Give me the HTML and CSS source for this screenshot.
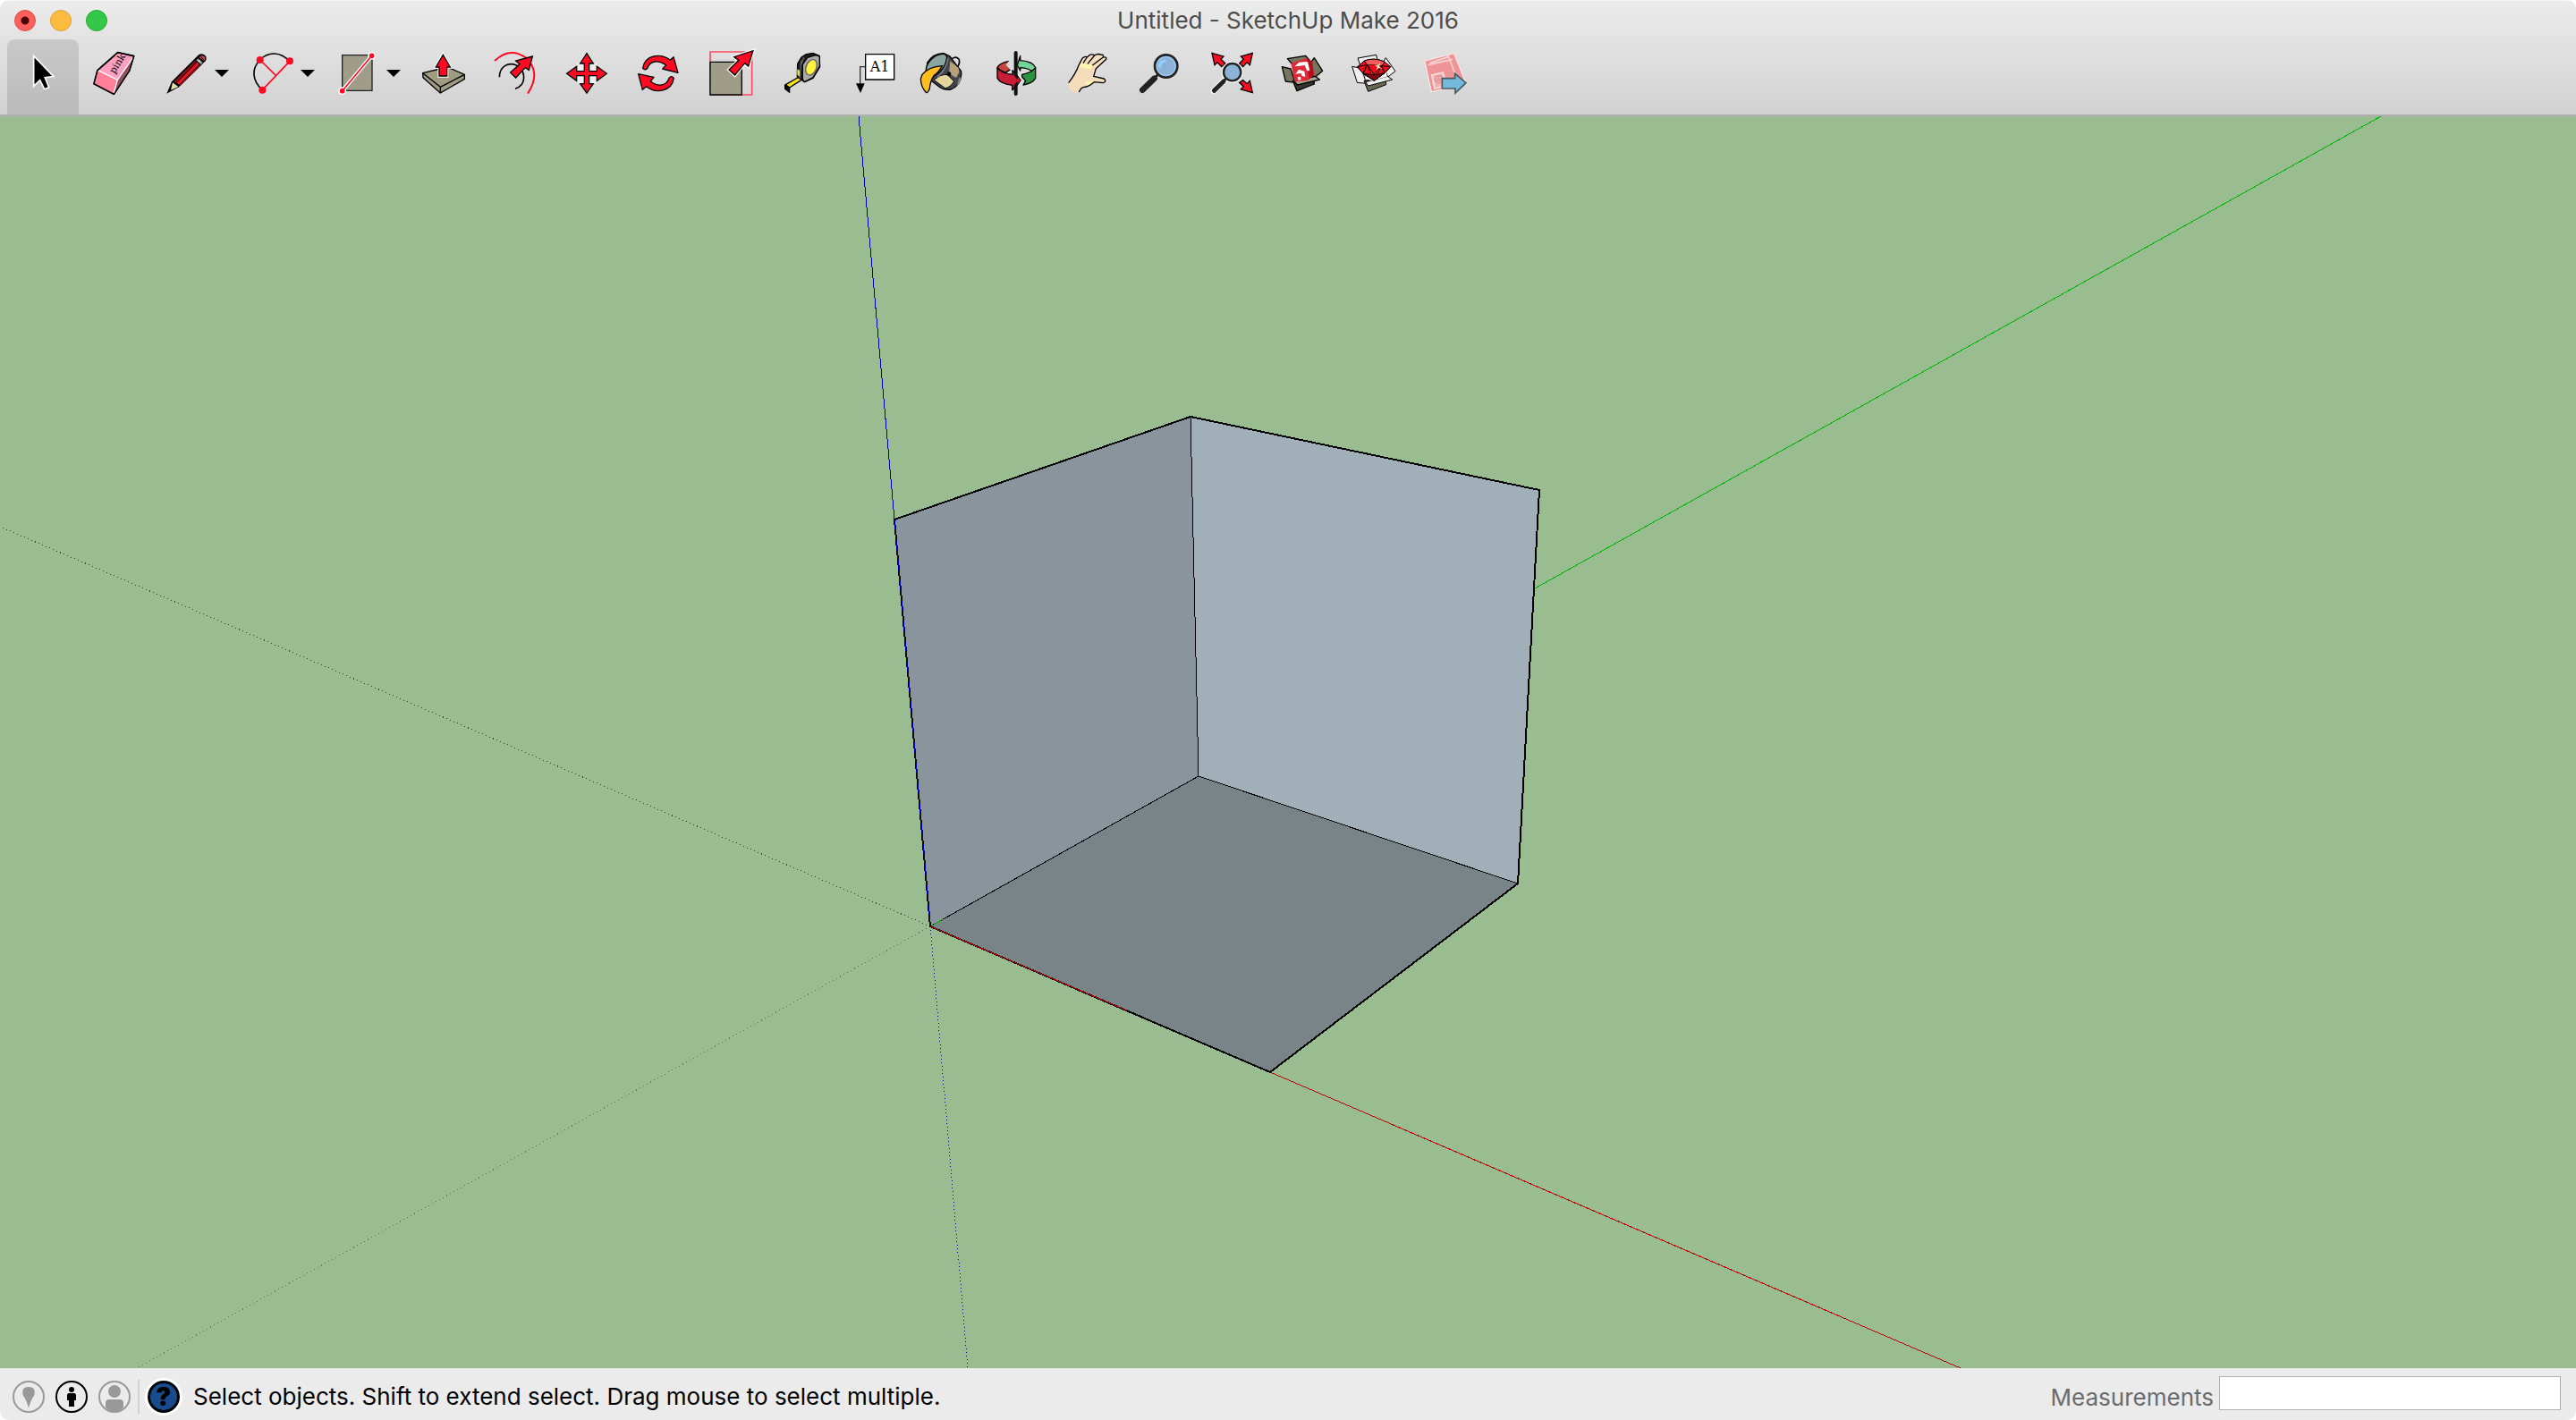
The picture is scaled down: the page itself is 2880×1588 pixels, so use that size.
FILE: index.html
```html
<!DOCTYPE html>
<html lang="en">
<head>
<meta charset="utf-8">
<title>Untitled - SketchUp Make 2016</title>
<link rel="stylesheet" href="styles.css">
</head>
<body>
<div class="window">
  <header class="chrome">
    <div class="titlebar">
      <div class="lights">
        <button class="light light-close" type="button" aria-label="Close"></button>
        <button class="light light-minimize" type="button" aria-label="Minimize"></button>
        <button class="light light-zoom" type="button" aria-label="Full screen"></button>
      </div>
      <h1 class="title">Untitled - SketchUp Make 2016</h1>
    </div>
    <nav class="toolbar" aria-label="Tools">
      <button class="tool tool-active" type="button" aria-label="Select">
        <svg class="icon" viewBox="72 162 144 168"><path d="M113 187V289L134 269L149 299L164 293L151 260L180 257Z" fill="#000" stroke="#fff" stroke-width="5"/></svg>
      </button>
      <button class="tool" type="button" aria-label="Eraser">
        <svg class="icon" viewBox="312 162 144 168">
          <g stroke-linejoin="round">
            <path d="M395 176L449 188L434 237L382 316L315 281L327 236Z" fill="#ff9fc0" stroke="#000" stroke-width="5"/>
            <path d="M329 236L394 268L382 314L317 280Z" fill="#ff8098"/>
            <path d="M394 268L446 192L433 237L382 314Z" fill="#94525f"/>
            <path d="M329 236L394 268L446 193M394 268L382 312" fill="none" stroke="#fff" stroke-width="4"/>
            <path d="M395 176L449 188L434 237L382 316L315 281L327 236Z" fill="none" stroke="#000" stroke-width="4"/>
          </g>
          <text class="eraser-label" x="384" y="249" transform="rotate(-58 384 249)">pink</text>
        </svg>
      </button>
      <button class="tool tool-menu" type="button" aria-label="Line">
        <svg class="icon" viewBox="552 162 144 168">
          <path d="M559 314L576 274L667 183Q681 176 691 189Q694 198 689 205L600 292Z" fill="#000"/>
          <path d="M579 277L598 291L573 302Z" fill="#e2dfa6"/>
          <path d="M584 273L654 203L659 208L590 279Z" fill="#7e1019"/>
          <path d="M593 278L661 209L668 215L600 284Z" fill="#f5121e"/>
          <path d="M602 284L670 217L674 220L606 287Z" fill="#7e1019"/>
          <path d="M658 202L664 196L680 210L674 216Z" fill="#999"/><path d="M663 204L670 202L671 209Z" fill="#fff"/>
          <path d="M668 193Q676 181 687 191Q691 198 684 205Z" fill="#c34c5a"/>
          <path d="M674 190L684 202" stroke="#000" stroke-width="3"/>
        </svg>
        <svg class="arrow" viewBox="0 0 16 8"><path d="M0 0H16L8 8Z"/></svg>
      </button>
      <button class="tool tool-menu" type="button" aria-label="2 Point Arc">
        <svg class="icon" viewBox="840 162 144 168">
          <path d="M880 302C845 270 843 230 872 201C900 172 940 173 971 205" fill="none" stroke="#000" stroke-width="5"/>
          <path d="M880 302L972 205M872 201L926 254" stroke="#ff0a22" stroke-width="5"/>
          <g fill="#ff0a22"><circle cx="880" cy="302" r="12"/><circle cx="972" cy="205" r="12"/><circle cx="872" cy="201" r="12"/></g>
        </svg>
        <svg class="arrow" viewBox="0 0 16 8"><path d="M0 0H16L8 8Z"/></svg>
      </button>
      <button class="tool tool-menu" type="button" aria-label="Rectangle">
        <svg class="icon" viewBox="1128 162 144 168">
          <path d="M1148 185H1248V304H1148Z" fill="#9f9c88" stroke="#222" stroke-width="4"/>
          <path d="M1148 305L1247 187" stroke="#fff" stroke-width="13"/>
          <g fill="#ff0a22" stroke="#fff" stroke-width="5"><circle cx="1148" cy="305" r="11"/><circle cx="1247" cy="187" r="11"/></g>
          <path d="M1148 305L1247 187" stroke="#ff0a22" stroke-width="5"/>
        </svg>
        <svg class="arrow" viewBox="0 0 16 8"><path d="M0 0H16L8 8Z"/></svg>
      </button>
      <button class="tool" type="button" aria-label="Push/Pull">
        <svg class="icon" viewBox="66 42 144 168">
          <g stroke="#000" stroke-width="4" stroke-linejoin="round">
            <path d="M68 125L151 105L208 130V145L127 192L69 140Z" fill="#9f9c82"/>
            <path d="M68 125L127 172L208 130M127 172V192" fill="none"/>
          </g>
          <path d="M136 64L160 105H149V135H123V105H112Z" fill="#ff0a22" stroke="#fff" stroke-width="10"/>
          <path d="M136 64L160 105H149V135H123V105H112Z" fill="#ff0a22" stroke="#000" stroke-width="4"/>
        </svg>
      </button>
      <button class="tool" type="button" aria-label="Offset">
        <svg class="icon" viewBox="306 42 144 168">
          <path d="M309 84Q360 36 413 73Q467 123 420 194" fill="none" stroke="#ff0a22" stroke-width="6"/>
          <path d="M325 139C325 102 355 88 382 99C414 116 418 163 378 178" fill="none" stroke="#000" stroke-width="5"/>
          <path d="M436 69L424 115L412 107L380 141L362 123L393 95L380 84Z" fill="#ff0a22" stroke="#000" stroke-width="4"/>
        </svg>
      </button>
      <button class="tool" type="button" aria-label="Move">
        <svg class="icon" viewBox="546 42 144 168">
          <path d="M584 92H652V160H584Z" fill="#eee"/>
          <path d="M618 59L640 93H626V119H652V103L685 127L652 151V134H626V161H640L618 192L596 161H610V134H584V151L551 127L584 103V119H610V93H596Z" fill="#ff0a22" stroke="#000" stroke-width="4"/>
        </svg>
      </button>
      <button class="tool" type="button" aria-label="Rotate">
        <svg class="icon" viewBox="786 42 144 168">
          <g fill="#ff0a22" stroke="#000" stroke-width="4" stroke-linejoin="round">
            <path d="M806 109C813 63 866 57 898 82L909 71L924 124L872 111L884 99C860 81 830 82 822 108Q814 118 806 109Z"/>
            <path d="M910 142C903 187 850 196 818 170L805 181L791 128L843 139L832 153C857 173 886 168 894 142Q902 132 910 142Z"/>
          </g>
        </svg>
      </button>
      <button class="tool" type="button" aria-label="Scale">
        <svg class="icon" viewBox="1026 42 144 168">
          <path d="M1032 54H1172V198H1032Z" fill="none" stroke="#ff2740" stroke-width="5" opacity=".8"/>
          <path d="M1032 88H1138V198H1032Z" fill="#9f9c88" stroke="#000" stroke-width="4"/>
          <path d="M1176 50L1160 102L1148 92L1115 132L1095 114L1128 82L1112 71Z" fill="#ff0a22" stroke="#fff" stroke-width="11"/>
          <path d="M1176 50L1160 102L1148 92L1115 132L1095 114L1128 82L1112 71Z" fill="#ff0a22" stroke="#000" stroke-width="4"/>
        </svg>
      </button>
      <button class="tool" type="button" aria-label="Tape Measure">
        <svg class="icon" viewBox="1266 42 144 168">
          <g stroke="#000" stroke-width="4" stroke-linejoin="round">
            <path d="M1285 164L1330 138L1342 146L1298 174Z" fill="#f1df20"/>
            <path d="M1283 165L1298 174V190L1283 178Z" fill="#111"/>
            <path d="M1352 63L1376 58L1398 67L1400 104L1377 142L1349 155L1324 138L1325 94L1338 72Z" fill="#222"/>
            <path d="M1358 73L1386 65L1399 69V102L1377 140L1348 155L1342 146V96Z" fill="#aaa"/>
          </g>
          <path d="M1324 112L1332 116V137L1324 131Z" fill="#e7dc39"/>
          <path d="M1338 82L1332 143M1346 72L1338 95" stroke="#777" stroke-width="3"/>
          <ellipse cx="1371" cy="106" rx="20" ry="29" fill="#666" transform="rotate(22 1371 106)"/>
          <ellipse cx="1371" cy="106" rx="15" ry="25" fill="#fff23c" transform="rotate(22 1371 106)"/>
        </svg>
      </button>
      <button class="tool" type="button" aria-label="Text">
        <svg class="icon" viewBox="66 42 144 168">
          <path d="M113 62H209V147H113Z" fill="#fff" stroke="#000" stroke-width="4"/>
          <path d="M112 104H95V162" fill="none" stroke="#333" stroke-width="4"/>
          <path d="M81 160H110L96 192Z"/>
          <text class="note-label" x="128" y="120">A1</text>
        </svg>
      </button>
      <button class="tool" type="button" aria-label="Paint Bucket">
        <svg class="icon" viewBox="306 42 144 168">
          <path d="M396 83Q413 65 426 78Q435 99 398 129" fill="none" stroke="#000" stroke-width="5"/>
          <path d="M320 90Q342 57 376 59L396 69L434 119Q437 166 397 181Q379 183 364 174L318 139Z" fill="#45454f" stroke="#000" stroke-width="4"/>
          <path d="M397 85L425 108L427 122L417 141L393 127Z" fill="#b6a178"/>
          <path d="M363 134Q380 128 388 131L410 153Q397 174 380 176L342 148Z" fill="#e2d69d" stroke="#000" stroke-width="3"/>
          <path d="M316 118Q315 90 347 68Q384 52 386 72Q382 112 346 133Q320 143 316 118Z" fill="#8ba49e" stroke="#000" stroke-width="4"/>
          <path d="M390 75Q384 113 354 139" fill="none" stroke="#777783" stroke-width="5"/>
          <path d="M303 130Q325 104 370 101Q356 126 342 134Q329 155 328 177Q323 191 317 191Q299 174 298 145Z" fill="#ffbd20" stroke="#000" stroke-width="4"/>
          <path d="M426 143L434 137L430 158L418 173Z" fill="#87878f"/>
          <circle cx="393" cy="128" r="7"/>
        </svg>
      </button>
      <button class="tool" type="button" aria-label="Orbit">
        <svg class="icon" viewBox="546 42 144 168">
          <g stroke="#000" stroke-width="4" stroke-linejoin="round">
            <path d="M555 107Q562 91 595 85L586 98L599 113L582 124Q565 117 555 107Z" fill="#cc443e"/>
            <path d="M632 67L622 99L632 117V107Q661 108 679 124L683 107Q675 86 632 83Z" fill="#73d49a"/>
            <path d="M683 107V142Q673 160 642 165L650 151L638 138V130Q669 125 683 107Z" fill="#2a953f"/>
            <path d="M555 107Q567 126 606 130V116L636 150L605 182V166Q564 160 555 142Z" fill="#c81d36"/>
          </g>
          <path d="M597 84L586 98L602 114M618 120L638 149L628 165" fill="none" stroke="#eee" stroke-width="4"/>
          <path d="M617 57V195" stroke="#111" stroke-width="12" stroke-linecap="round"/>
          <path d="M590 143H608V130L625 150L609 168V158H590Z" fill="#c81d36"/>
        </svg>
      </button>
      <button class="tool" type="button" aria-label="Pan">
        <svg class="icon" viewBox="786 42 144 168">
          <path d="M794 158Q818 127 828 99L840 76Q850 67 856 72L864 65Q873 60 881 66Q892 58 904 64Q912 61 910 72Q924 70 920 79L886 110L878 136L913 144Q923 154 910 158L880 155Q860 172 842 173Q832 178 829 189Q808 197 797 178Z" fill="#f5ddbc"/>
          <path d="M825 106L838 93L876 99L868 112L834 106ZM850 160L858 150L879 154L862 168Z" fill="#fff6ad"/>
          <path d="M794 158Q818 127 828 99L840 76Q850 67 856 72L864 65Q873 60 881 66Q892 58 904 64Q912 61 910 72Q924 70 920 79L886 110L878 136L913 144Q923 154 910 158L880 155Q860 172 842 173Q832 178 829 189M856 72L843 92M881 66L858 94M910 72L874 99" fill="none" stroke="#000" stroke-width="4" stroke-linejoin="round"/>
        </svg>
      </button>
      <button class="tool" type="button" aria-label="Zoom">
        <svg class="icon" viewBox="1026 42 144 168">
          <path d="M1092 131L1041 183" stroke="#fff" stroke-width="16" opacity=".5"/>
          <path d="M1082 143L1042 182" stroke="#222" stroke-width="20" stroke-linecap="round"/>
          <path d="M1094 130L1082 143" stroke="#222" stroke-width="9"/>
          <circle cx="1121" cy="102" r="37" fill="#8cb3d7" stroke="#222" stroke-width="10"/>
          <circle cx="1121" cy="102" r="32" fill="none" stroke="#9dccf4" stroke-width="4"/>
          <path d="M1100 105Q1099 88 1116 85" fill="none" stroke="#8fd0ff" stroke-width="9" stroke-linecap="round"/>
        </svg>
      </button>
      <button class="tool" type="button" aria-label="Zoom Extents">
        <svg class="icon" viewBox="96 42 144 168">
          <g fill="#ff0a22" stroke="#000" stroke-width="4">
            <path d="M105 58L144 69L135 79L150 93L137 104L123 89L114 98Z"/>
            <path d="M241 58L202 69L211 79L197 93L209 104L223 89L232 98Z"/>
            <path d="M241 191L202 180L211 170L197 157L209 149L223 161L232 151Z"/>
          </g>
          <path d="M150 146L111 184" stroke="#fff" stroke-width="20" stroke-linecap="round"/>
          <circle cx="173" cy="122" r="36" fill="#fff"/>
          <path d="M144 153L112 184" stroke="#222" stroke-width="15" stroke-linecap="round"/>
          <path d="M152 144L143 153" stroke="#222" stroke-width="8"/>
          <circle cx="173" cy="122" r="29" fill="#8cb3d7" stroke="#222" stroke-width="7"/>
        </svg>
      </button>
      <button class="tool" type="button" aria-label="3D Warehouse">
        <svg class="icon" viewBox="336 42 144 168">
          <g fill="#77745f" stroke="#000" stroke-width="4" stroke-linejoin="round">
            <path d="M358 77L419 67L434 84L380 102Z"/>
            <path d="M340 104L369 111L384 157L352 153Z"/>
            <path d="M435 92L448 74L476 118L446 143Z"/>
            <path d="M376 151L447 136L448 162L390 185Z" fill="#37352b"/>
            <path d="M380 153L451 136L466 147L392 165Z" fill="#aaa791"/>
          </g>
          <path d="M370 92L423 75L441 88L447 132L425 151L382 154Z" fill="#df2936"/>
          <path d="M423 75L441 88L447 132L430 147Z" fill="#b60e1d"/>
          <path d="M382 103L397 89L426 87L433 117L424 118L416 99L394 102ZM385 128L396 113L415 119L418 137L406 135L404 126ZM392 139L402 137L404 148L394 149Z" fill="#fff"/>
        </svg>
      </button>
      <button class="tool" type="button" aria-label="Extension Warehouse">
        <svg class="icon" viewBox="576 42 144 168">
          <g fill="#eee" stroke="#000" stroke-width="3" stroke-linejoin="round">
            <path d="M594 75L656 64L660 82L603 101Z"/>
            <path d="M575 103L606 109L623 160L592 157Z"/>
            <path d="M676 93L688 74L720 119L695 138Z"/>
            <path d="M615 151L687 138L689 164L629 187Z" fill="#6a6757"/>
            <path d="M620 155L694 136L710 147L629 168Z"/>
          </g>
          <path d="M616 105L688 104L692 137L640 151L622 145Z" fill="#fff"/>
          <g stroke="#000" stroke-width="3" stroke-linejoin="round">
            <path d="M593 104L616 84Q650 71 685 88L704 104L684 125L649 151L612 127Z" fill="#f6101d"/>
            <path d="M616 84Q650 71 685 88L674 101L625 97Z" fill="#f45b5b"/>
            <path d="M593 104L625 97L612 127ZM625 97L649 129L674 101M674 101L684 125L704 104ZM612 127L625 97L637 126M661 125L674 101L684 125" fill="#ef0b17"/>
            <path d="M612 127L649 131L684 125L649 151Z" fill="#800712"/>
          </g>
          <path d="M655 90L662 99L671 91L666 103L675 110L664 108L656 117L659 105L651 99L660 100Z" fill="#ffe4b0"/>
        </svg>
      </button>
      <button class="tool" type="button" aria-label="Send to LayOut">
        <svg class="icon" viewBox="816 42 144 168">
          <path d="M818 84L917 59L958 162L841 188Z" fill="#ef9496" stroke="#f6e5e5" stroke-width="4"/>
          <g fill="none" stroke="#f5d2d2" stroke-width="5">
            <path d="M830 98L911 79M897 66L930 151M836 91L900 70"/>
            <path d="M842 132L880 123L892 167L852 177Z" fill="#efb4b4" stroke="#f8dddd"/>
            <circle cx="866" cy="146" r="12" stroke="#df8b8d" stroke-width="4"/>
            <path d="M860 154L865 139L872 151M861 149H872" stroke="#df8b8d" stroke-width="3"/>
          </g>
          <path d="M877 143H920V127L957 158L921 192V177H877Z" fill="#75b9df" stroke="#4c5960" stroke-width="5"/>
        </svg>
      </button>
    </nav>
  </header>

  <main class="viewport">
    <svg class="scene" viewBox="0 130 2880 1400" preserveAspectRatio="xMidYMid slice" role="img" aria-label="Model view">
      <path class="axis axis-red axis-dotted" pathLength="1040" d="M1040 1036L0 589"/>
      <path class="axis axis-green axis-dotted" pathLength="887" d="M1040 1036L153 1530"/>
      <path class="axis axis-blue axis-dotted" pathLength="494" d="M1040 1036L1082 1530"/>
      <path class="axis axis-green" d="M1716 658L2662 130"/>
      <path class="axis axis-blue" d="M1000 581L960 130"/>
      <path class="axis axis-red" d="M1420 1199L2192 1530"/>
      <path class="face face-left" d="M1000 581L1331 466L1340 868L1040 1036Z"/>
      <path class="face face-right" d="M1331 466L1721 548L1697 988L1340 868Z"/>
      <path class="face face-floor" d="M1040 1036L1340 868L1697 988L1420 1199Z"/>
      <path class="edge" d="M1331 466L1340 868L1040 1036M1340 868L1697 988"/>
      <path class="edge edge-profile" d="M1040 1036L1000 581L1331 466L1721 548L1697 988L1420 1199Z"/>
      <path class="axis axis-blue" d="M1040 1034L1000 581"/>
      <path class="axis axis-red" d="M1040 1036L1260 1130"/>
      <path class="axis axis-green" d="M1042 1035L1054 1028"/>
    </svg>
  </main>

  <footer class="statusbar">
    <div class="status-buttons">
      <button class="status-button" type="button" aria-label="Geo-location">
        <svg class="status-icon status-icon-off" viewBox="0 0 36 36"><circle class="ring" cx="18" cy="18" r="17"/><path d="M18 31Q16 22 12 17Q9 7 18 7Q27 7 24 17Q20 22 18 31Z"/></svg>
      </button>
      <button class="status-button" type="button" aria-label="Credits">
        <svg class="status-icon" viewBox="0 0 36 36"><circle class="ring" cx="18" cy="18" r="17"/><circle cx="18" cy="10" r="3"/><path d="M15 14H21Q23 14 23 17V22H21V29H15V22H13V17Q13 14 15 14Z"/></svg>
      </button>
      <button class="status-button" type="button" aria-label="Sign in">
        <svg class="status-icon status-icon-off" viewBox="0 0 36 36"><circle class="ring" cx="18" cy="18" r="17"/><circle cx="18" cy="12" r="7"/><path d="M8 30V25Q8 21 12 21H24Q28 21 28 25V30Q18 39 8 30Z"/></svg>
      </button>
    </div>
    <button class="help" type="button" aria-label="Help">?</button>
    <p class="hint">Select objects. Shift to extend select. Drag mouse to select multiple.</p>
    <div class="measure">
      <label class="measure-label" for="measurements">Measurements</label>
      <input class="measure-input" id="measurements" type="text">
    </div>
  </footer>
</div>
</body>
</html>
```
FILE: styles.css
```css
* {
  box-sizing: border-box;
}

body {
  margin: 0;
  background: #fff;
  font-family: Inter, "Liberation Sans", sans-serif;
  font-size: 26px;
  line-height: 32px;
  color: #000;
}

button {
  margin: 0;
  padding: 0;
  border: 0;
  background: none;
  font: inherit;
  color: inherit;
}

.window {
  display: flex;
  flex-direction: column;
  min-height: 100vh;
  border-radius: 10px;
  overflow: hidden;
}

/* Title bar and tools */
.chrome {
  background: linear-gradient(#ececec, #d1d1d1);
  border-top: 1px solid #f6f6f6;
  border-bottom: 2px solid #b1afb1;
}

.titlebar {
  display: grid;
  grid-template-columns: 1fr auto 1fr;
  align-items: center;
  height: 43px;
  padding: 0 16px;
}

.lights {
  display: flex;
  gap: 16px;
}

.light {
  width: 24px;
  height: 24px;
  border-radius: 50%;
  border: 1px solid;
}

.light-close {
  background: radial-gradient(circle, #4d0000 0 4px, #fc605c 5px);
  border-color: #df4744;
}

.light-minimize {
  background: #fdbc40;
  border-color: #dea032;
}

.light-zoom {
  background: #34c84a;
  border-color: #28a935;
}

.title {
  margin: 0;
  font-size: 26px;
  font-weight: 400;
  color: #4d4d4d;
}

.toolbar {
  display: flex;
  height: 84px;
  padding: 0 8px;
}

.tool {
  display: flex;
  justify-content: center;
  width: 80px;
  padding-top: 10px;
  border-radius: 8px 8px 0 0;
}

.tool-active {
  background: rgba(0, 0, 0, 0.11);
}

.tool-menu {
  gap: 8px;
  width: 96px;
  padding-left: 8px;
}

.icon {
  flex: none;
  width: 48px;
  height: 56px;
  overflow: visible;
}

.arrow {
  flex: none;
  width: 16px;
  height: 8px;
  margin-top: 24px;
}

.eraser-label {
  font: 32px "DejaVu Serif", serif;
}

.note-label {
  font: 48px "DejaVu Serif", serif;
}

/* Model view */
.viewport {
  position: relative;
  flex: 1;
  min-height: 0;
  background: #9abc91;
}

.scene {
  position: absolute;
  inset: 0;
  width: 100%;
  height: 100%;
  shape-rendering: crispEdges;
}

.axis {
  fill: none;
  stroke-width: 1;
}

.axis-red {
  stroke: #c00000;
}

.axis-green {
  stroke: #00b400;
}

.axis-blue {
  stroke: #0000b4;
}

.axis-dotted {
  stroke-dasharray: 1 3;
}

.face-left {
  fill: #8a949c;
}

.face-right {
  fill: #a1afb8;
}

.face-floor {
  fill: #798489;
}

.edge {
  fill: none;
  stroke: #000;
  stroke-width: 1;
}

.edge-profile {
  stroke-width: 2;
}

/* Status bar */
.statusbar {
  display: flex;
  align-items: center;
  height: 58px;
  padding: 6px 17px 0 14px;
  background: #ebebeb;
}

.status-buttons {
  display: flex;
  align-items: center;
  gap: 12px;
  height: 38px;
  padding-right: 8px;
  border-right: 2px solid #d2d2d2;
}

.status-button,
.status-icon {
  display: block;
  width: 36px;
  height: 36px;
}

.status-icon-off {
  fill: #999;
}

.ring {
  fill: none;
  stroke: #000;
  stroke-width: 2;
}

.status-icon-off .ring {
  stroke: #999;
}

.help {
  width: 42px;
  height: 42px;
  margin: 0 12px 0 6px;
  border: 3px solid #fff;
  border-radius: 50%;
  background: #194a8b;
  box-shadow: inset 0 0 0 3px #000;
  font-size: 28px;
  font-weight: 900;
}

.hint {
  flex: 1;
  margin: 0;
}

.measure {
  display: flex;
  align-items: flex-start;
  gap: 6px;
  height: 46px;
}

.measure-label {
  padding-top: 8px;
  color: #6b6b6b;
}

.measure-input {
  width: 382px;
  height: 38px;
  margin: 0;
  border: 1px solid #b0b0b0;
  background: #fff;
  font: inherit;
}
```
